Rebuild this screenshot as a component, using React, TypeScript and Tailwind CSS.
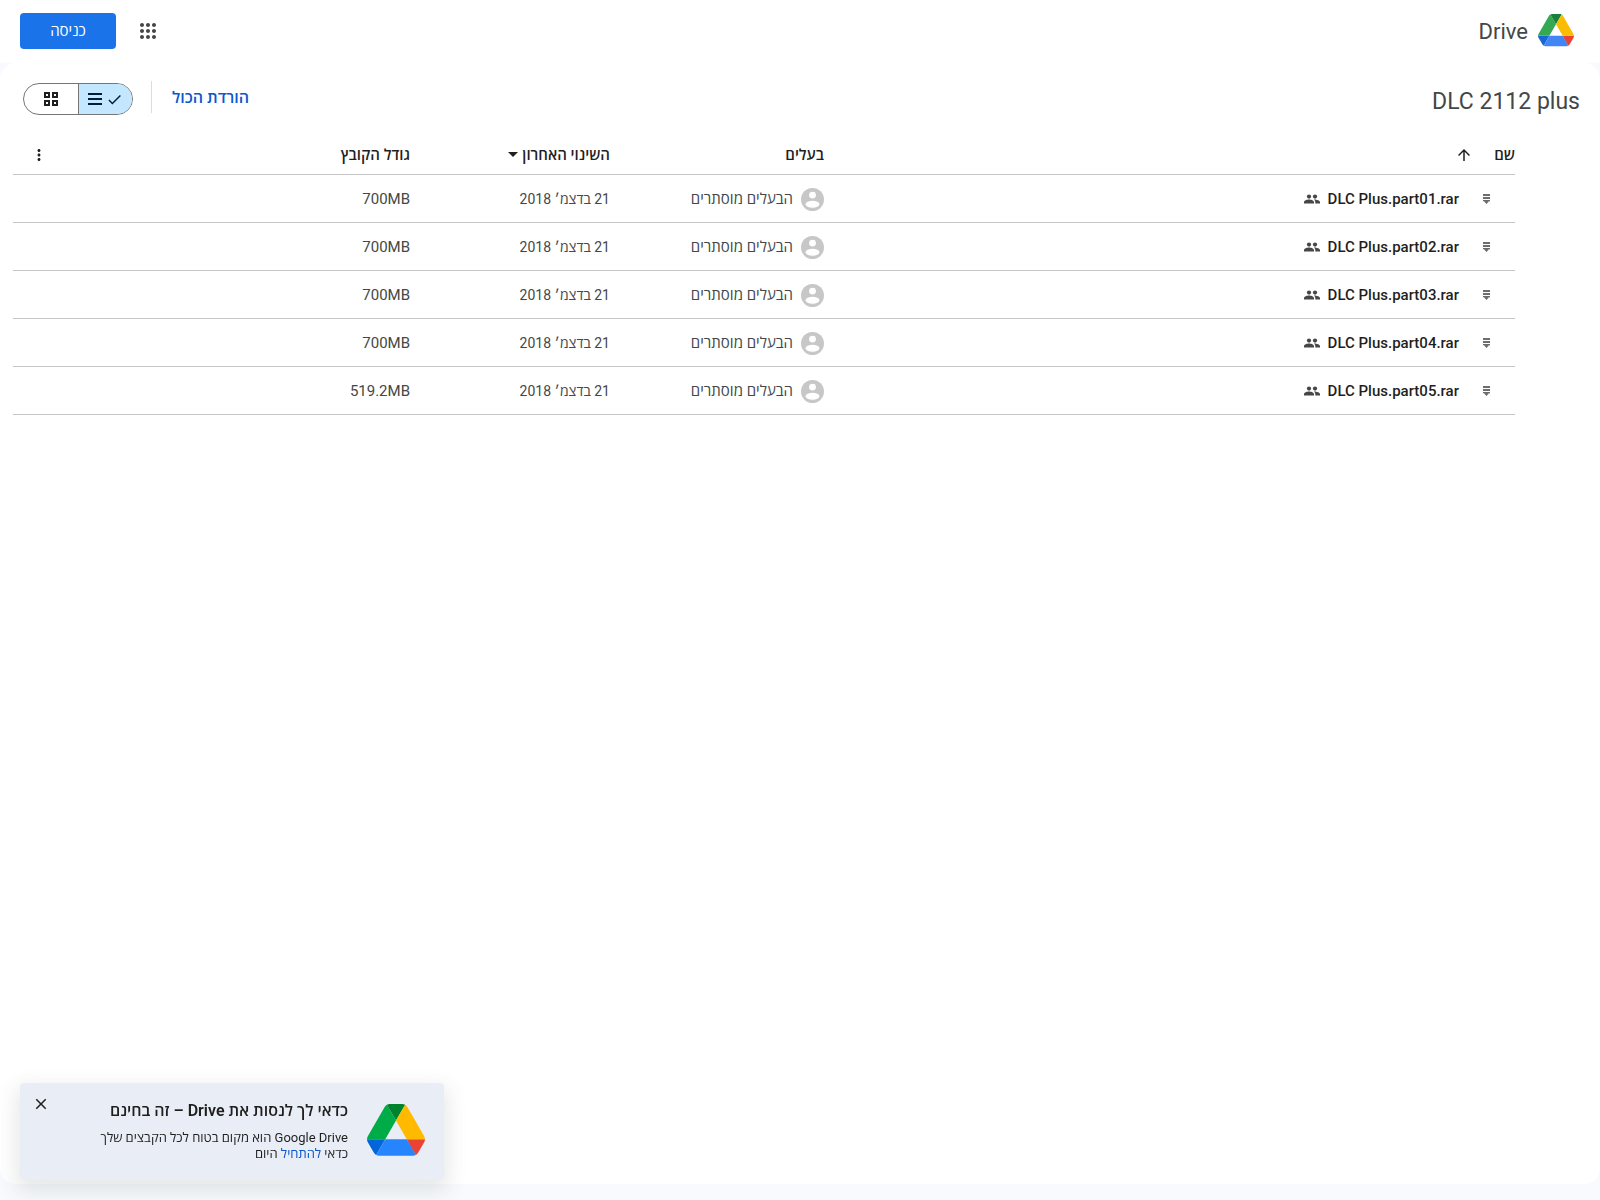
import React from "react";

const files = [
  { name: "DLC Plus.part01.rar", size: "700MB" },
  { name: "DLC Plus.part02.rar", size: "700MB" },
  { name: "DLC Plus.part03.rar", size: "700MB" },
  { name: "DLC Plus.part04.rar", size: "700MB" },
  { name: "DLC Plus.part05.rar", size: "519.2MB" },
];

type LogoProps = { className: string; soft?: boolean };

function DriveLogo({ className, soft = false }: LogoProps) {
  const c = soft
    ? ["#1967d2", "#34a853", "#ea4335", "#188038", "#4285f4", "#fbbc04"]
    : ["#0066da", "#00ac47", "#ea4335", "#00832d", "#2684fc", "#ffba00"];
  return (
    <svg viewBox="0 0 87.3 78" className={className} aria-hidden="true">
      <path fill={c[0]} d="m6.6 66.85 3.85 6.65c.8 1.4 1.95 2.5 3.3 3.3l13.75-23.8h-27.5c0 1.55.4 3.1 1.2 4.5z" />
      <path fill={c[1]} d="m43.65 25-13.75-23.8c-1.35.8-2.5 1.9-3.3 3.3l-25.4 44a9.06 9.06 0 0 0 -1.2 4.5h27.5z" />
      <path fill={c[2]} d="m73.55 76.8c1.35-.8 2.5-1.9 3.3-3.3l1.6-2.75 7.65-13.25c.8-1.4 1.2-2.95 1.2-4.5h-27.502l5.852 11.5z" />
      <path fill={c[3]} d="m43.65 25 13.75-23.8c-1.35-.8-2.9-1.2-4.5-1.2h-18.5c-1.6 0-3.15.45-4.5 1.2z" />
      <path fill={c[4]} d="m59.8 53h-32.3l-13.75 23.8c1.35.8 2.9 1.2 4.5 1.2h50.8c1.6 0 3.15-.45 4.5-1.2z" />
      <path fill={c[5]} d="m73.4 26.5-12.7-22c-.8-1.4-1.95-2.5-3.3-3.3l-13.75 23.8 16.15 28h27.45c0-1.55-.4-3.1-1.2-4.5z" />
    </svg>
  );
}

function Icon({ d, className }: { d: string; className: string }) {
  return (
    <svg viewBox="0 0 24 24" fill="currentColor" className={className} aria-hidden="true">
      <path d={d} />
    </svg>
  );
}

const APPS =
  "M6 8c1.1 0 2-.9 2-2s-.9-2-2-2-2 .9-2 2 .9 2 2 2zm6 12c1.1 0 2-.9 2-2s-.9-2-2-2-2 .9-2 2 .9 2 2 2zm-6 0c1.1 0 2-.9 2-2s-.9-2-2-2-2 .9-2 2 .9 2 2 2zm0-6c1.1 0 2-.9 2-2s-.9-2-2-2-2 .9-2 2 .9 2 2 2zm6 0c1.1 0 2-.9 2-2s-.9-2-2-2-2 .9-2 2 .9 2 2 2zm4-8c0 1.1.9 2 2 2s2-.9 2-2-.9-2-2-2-2 .9-2 2zm-4 2c1.1 0 2-.9 2-2s-.9-2-2-2-2 .9-2 2 .9 2 2 2zm6 6c1.1 0 2-.9 2-2s-.9-2-2-2-2 .9-2 2 .9 2 2 2zm0 6c1.1 0 2-.9 2-2s-.9-2-2-2-2 .9-2 2 .9 2 2 2z";
const MORE =
  "M12 8c1.1 0 2-.9 2-2s-.9-2-2-2-2 .9-2 2 .9 2 2 2zm0 2c-1.1 0-2 .9-2 2s.9 2 2 2 2-.9 2-2-.9-2-2-2zm0 6c-1.1 0-2 .9-2 2s.9 2 2 2 2-.9 2-2-.9-2-2-2z";
const ARROW_UP = "M4 12l1.41 1.41L11 7.83V20h2V7.83l5.58 5.59L20 12l-8-8-8 8z";
const CHECK = "M9 16.17L4.83 12l-1.42 1.41L9 19 21 7l-1.41-1.41z";
const CLOSE =
  "M19 6.41L17.59 5 12 10.59 6.41 5 5 6.41 10.59 12 5 17.59 6.41 19 12 13.41 17.59 19 19 17.59 13.41 12z";

function ArchiveIcon() {
  return (
    <svg viewBox="0 0 7 10" className="mr-[5px] h-[10px] w-[7px] text-[#6b6d6f]" fill="currentColor" aria-hidden="true">
      <path d="M0 0h7v2H0zM0 3h7v2H0zM0 6h7v1.2H6L3.5 10 1 7.2H0z" />
    </svg>
  );
}

function PeopleIcon() {
  return (
    <svg viewBox="0 0 16 10" className="h-[10px] w-4 text-[#444746]" fill="currentColor" aria-label="משותף" role="img">
      <circle cx="5" cy="2.6" r="2.1" />
      <circle cx="11" cy="2.6" r="2.1" />
      <path d="M0 9.5V8.2C0 6.4 3.2 5.6 5 5.6s5 .8 5 2.6v1.3zM11.3 9.5V8.2c0-1.2-.6-2-1.5-2.6 2-.2 6.2.7 6.2 2.6v1.3z" />
    </svg>
  );
}

function Avatar() {
  return (
    <svg viewBox="0 0 24 24" className="size-[23px] shrink-0" aria-hidden="true">
      <circle cx="12" cy="12" r="12" fill="#c7c7c7" />
      <circle cx="12" cy="7.4" r="3.6" fill="#fff" />
      <ellipse cx="12" cy="17" rx="7.2" ry="3.6" fill="#fff" />
    </svg>
  );
}

export default function App() {
  return (
    <div
      dir="rtl"
      className="flex min-h-screen flex-col bg-[#f8fafd] font-['Roboto','Open_Sans',sans-serif] text-[#1f1f1f]"
    >
      <header className="flex h-[63px] items-center justify-between bg-white pr-[26px] pb-0.5 pl-5">
        <a href="#drive" className="flex items-center gap-[10px] text-[22px] text-[#444746]">
          <DriveLogo className="w-9" soft />
          <span className="pt-0.5">Drive</span>
        </a>
        <div className="flex items-center gap-5">
          <button aria-label="אפליקציות" className="text-[#444746]">
            <Icon d={APPS} className="size-6" />
          </button>
          <button className="h-9 w-24 rounded bg-[#1a73e8] pt-0.5 text-[15px] font-medium text-white">כניסה</button>
        </div>
      </header>

      <main className="mb-4 flex-1 rounded-2xl bg-white">
        <div className="flex h-[63px] items-center justify-between pt-[5px] pr-5 pl-[23px]">
          <h1 className="pt-[10px] text-[23px] text-[#444746]">DLC 2112 plus</h1>
          <div className="flex items-center">
            <button className="pt-0.5 text-base font-semibold text-[#0b57d0]">הורדת הכול</button>
            <div className="mr-5 ml-[18px] h-8 w-px bg-[#dadce0]" />
            <div className="mt-1 flex h-8 w-[110px] overflow-hidden rounded-full border border-[#747775]">
              <button
                aria-label="תצוגת רשימה"
                aria-pressed="true"
                className="flex flex-1 items-center justify-center gap-1 bg-[#c2e7ff] text-[#001d35]"
              >
                <Icon d={CHECK} className="size-[17px]" />
                <svg viewBox="0 0 14 12" className="h-3 w-[14px]" fill="currentColor" aria-hidden="true">
                  <path d="M0 0h14v2H0zM0 5h14v2H0zM0 10h14v2H0z" />
                </svg>
              </button>
              <button
                aria-label="תצוגת רשת"
                aria-pressed="false"
                className="flex flex-1 items-center justify-center border-r border-[#747775]"
              >
                <svg viewBox="0 0 14 14" className="size-[14px]" fill="none" stroke="currentColor" strokeWidth="2" aria-hidden="true">
                  <path d="M1 1h4v4H1zM9 1h4v4H9zM1 9h4v4H1zM9 9h4v4H9z" />
                </svg>
              </button>
            </div>
          </div>
        </div>

        <div className="pr-[85px] pl-[13px]">
          <table className="w-full table-fixed text-right text-[15px]">
            <thead>
              <tr className="h-12 border-b border-[#c7c7c7] [&>th]:pt-[10px] [&>th]:font-semibold">
                <th>
                  <button className="flex items-center gap-[21px]">
                    שם
                    <Icon d={ARROW_UP} className="size-[18px]" />
                  </button>
                </th>
                <th className="w-[214px]">בעלים</th>
                <th className="w-[200px]">
                  <button className="flex items-center gap-1">
                    השינוי האחרון
                    <svg viewBox="0 0 10 5" className="h-[5px] w-[10px]" fill="currentColor" aria-hidden="true">
                      <path d="M0 0h10L5 5z" />
                    </svg>
                  </button>
                </th>
                <th className="w-[362px]">גודל הקובץ</th>
                <th className="w-[35px]">
                  <button aria-label="אפשרויות נוספות" className="flex">
                    <Icon d={MORE} className="size-[18px]" />
                  </button>
                </th>
              </tr>
            </thead>
            <tbody className="text-[#444746]">
              {files.map((f) => (
                <tr key={f.name} className="h-12 border-b border-[#c7c7c7] [&>td]:pt-0.5">
                  <td>
                    <div className="flex items-center gap-2 pr-5">
                      <ArchiveIcon />
                      <span dir="ltr" className="mr-4 font-medium text-[#1f1f1f]">{f.name}</span>
                      <PeopleIcon />
                    </div>
                  </td>
                  <td>
                    <div className="flex items-center gap-2">
                      <Avatar />
                      הבעלים מוסתרים
                    </div>
                  </td>
                  <td className="text-sm">21 בדצמ׳ 2018</td>
                  <td>{f.size}</td>
                  <td />
                </tr>
              ))}
            </tbody>
          </table>
        </div>
      </main>

      <aside className="fixed bottom-5 left-5 flex w-[424px] gap-[19px] rounded bg-[#e9edf6] py-[18px] pr-[19px] pl-3 shadow-[0_8px_20px_4px_rgba(60,64,67,0.12)]">
        <DriveLogo className="mt-[3px] w-[58px] self-start" />
        <div className="flex-1">
          <h2 className="text-base leading-5 font-semibold">כדאי לך לנסות את Drive – זה בחינם</h2>
          <p className="mt-[9px] text-[13px] leading-4">
            Google Drive הוא מקום בטוח לכל הקבצים שלך
            <br />
            כדאי <a href="#start" className="text-[#0b57d0]">להתחיל</a> היום
          </p>
        </div>
        <button aria-label="סגירה" className="-mt-1.5 self-start">
          <Icon d={CLOSE} className="size-[18px]" />
        </button>
      </aside>
    </div>
  );
}
